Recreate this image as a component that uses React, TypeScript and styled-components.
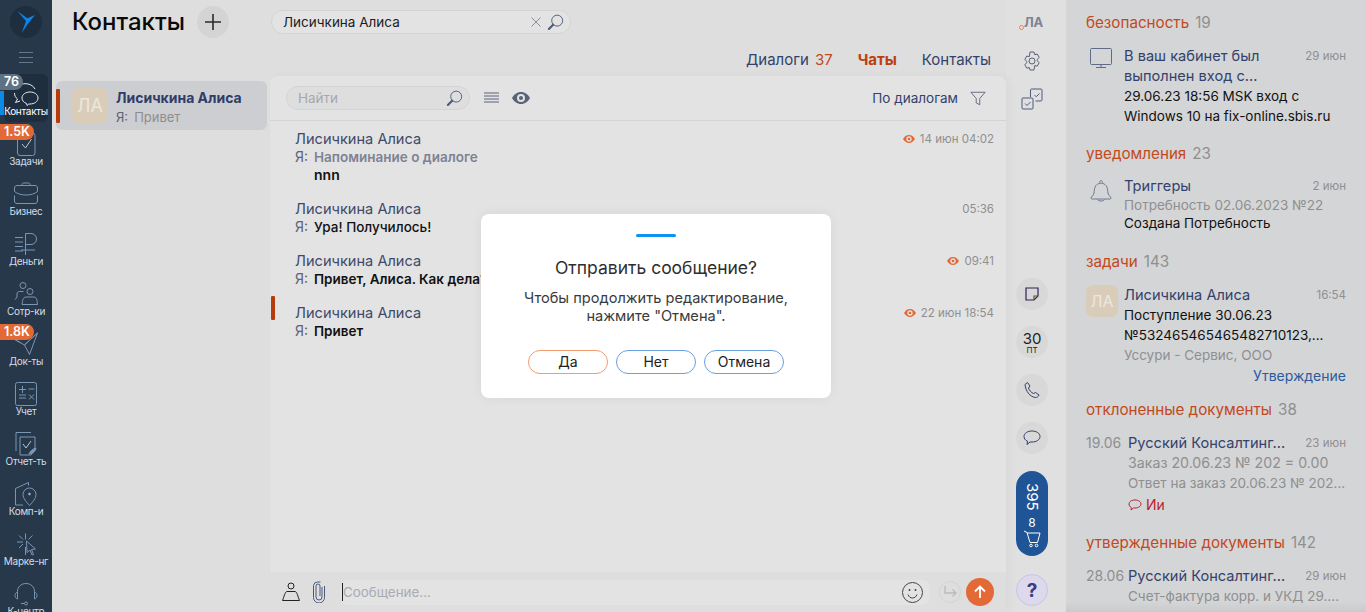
import React from "react";
import styled, { createGlobalStyle } from "styled-components";

const GlobalStyle = createGlobalStyle`
  html, body {
    margin: 0;
    padding: 0;
    height: 100%;
    overflow: hidden;
  }
  body {
    font-family: Inter, "Noto Sans", sans-serif;
    font-size: 14px;
    color: #000;
    background: #dedede;
  }
  #root {
    height: 100%;
  }
`;

const Page = styled.div`
  display: flex;
  height: 612px;
  width: 1366px;
  overflow: hidden;
  position: relative;
`;

/* left navigation */
const Sidebar = styled.nav`
  width: 52px;
  flex: none;
  background: #27384a;
  display: flex;
  flex-direction: column;
  align-items: center;
  padding-top: 6px;
  box-sizing: border-box;
  overflow: hidden;
`;

const LogoCircle = styled.div`
  width: 32px;
  height: 32px;
  border-radius: 50%;
  background: #1f2e3e;
  flex: none;
`;

const Burger = styled.div`
  width: 14px;
  height: 9px;
  flex: none;
  margin: 14px 0 9px;
  border-top: 1px solid #64778b;
  border-bottom: 1px solid #64778b;
  position: relative;

  &::after {
    content: "";
    position: absolute;
    left: 0;
    right: 0;
    top: 4px;
    border-top: 1px solid #64778b;
  }
`;

const NavItem = styled.div<{ $active?: boolean }>`
  position: relative;
  width: 52px;
  height: 50px;
  flex: none;
  display: flex;
  flex-direction: column;
  align-items: center;
  padding-top: 8px;
  box-sizing: border-box;
  color: ${(p) => (p.$active ? "#fff" : "#d5dde6")};

  ${(p) =>
    p.$active &&
    `
    &::before {
      content: "";
      position: absolute;
      left: 4px;
      right: 4px;
      top: 2px;
      bottom: 0;
      border-radius: 6px;
      background: #1f2e3e;
    }
    &::after {
      content: "";
      position: absolute;
      left: 0;
      top: 19px;
      width: 4px;
      height: 24px;
      background: #0d8ae5;
    }
  `}

  svg {
    position: relative;
    display: block;
    flex: none;
  }
`;

const NavLabel = styled.span`
  position: relative;
  font-size: 10px;
  line-height: 12px;
  margin-top: -1px;
  white-space: nowrap;
  letter-spacing: -0.3px;
`;

const NavBadge = styled.span<{ $tone: "grey" | "orange" }>`
  position: absolute;
  z-index: 1;
  left: 0;
  top: 2px;
  height: 16px;
  line-height: 16px;
  padding: 0 4px;
  border-radius: 0 8px 8px 0;
  font-size: 12.5px;
  font-weight: 600;
  color: #fff;
  background: ${(p) => (p.$tone === "grey" ? "#5f7283" : "#e36a36")};
`;

/* contacts column */
const ContactsColumn = styled.section`
  width: 218px;
  flex: none;
  display: flex;
  flex-direction: column;
`;

const TitleRow = styled.div`
  display: flex;
  align-items: center;
  gap: 12px;
  padding: 6px 0 0 20px;
  height: 32px;
`;

const Title = styled.h1`
  margin: 0;
  font-size: 24px;
  font-weight: 500;
  line-height: 32px;
  color: #0a0a0a;
`;

const RoundButton = styled.div<{ $size?: number; $bg?: string }>`
  width: ${(p) => p.$size ?? 32}px;
  height: ${(p) => p.$size ?? 32}px;
  border-radius: 50%;
  background: ${(p) => p.$bg ?? "#d4d4d4"};
  flex: none;
  display: flex;
  flex-direction: column;
  align-items: center;
  justify-content: center;
`;

const ContactCard = styled.div`
  position: relative;
  margin: 43px 3px 0 4px;
  height: 49px;
  border-radius: 6px;
  background: #cdced2;
  display: flex;
  align-items: center;
  padding-left: 16px;
  gap: 8px;
`;

const Marker = styled.i<{ $top: number; $left: number; $height: number }>`
  position: absolute;
  left: ${(p) => p.$left}px;
  top: ${(p) => p.$top}px;
  width: 4px;
  height: ${(p) => p.$height}px;
  border-radius: 1px;
  background: #b53c0b;
`;

const Avatar = styled.div<{ $size: number }>`
  width: ${(p) => p.$size}px;
  height: ${(p) => p.$size}px;
  border-radius: 7px;
  background: #d9cdb9;
  color: #ece7de;
  flex: none;
  display: flex;
  align-items: center;
  justify-content: center;
  font-size: ${(p) => Math.round(p.$size / 2)}px;
`;

const CardText = styled.div`
  padding-top: 4px;
`;

const CardName = styled.div`
  font-weight: 700;
  line-height: 18px;
  color: #2f3d68;
`;

const CardPreview = styled.div`
  font-size: 13px;
  line-height: 20px;
  color: #8d8d8d;
  display: flex;
  gap: 6px;
  span:first-child {
    color: #5d6478;
  }
`;

/* chat column */
const ChatColumn = styled.section`
  width: 736px;
  flex: none;
  display: flex;
  flex-direction: column;
`;

const SearchBar = styled.div`
  margin: 10px 0 0 1px;
  width: 300px;
  height: 24px;
  box-sizing: border-box;
  border: 1px solid #d4d4d4;
  border-radius: 12px;
  background: #e3e3e3;
  display: flex;
  align-items: center;
  padding: 0 6px 0 11px;
  flex: none;
`;

const SearchText = styled.span<{ $muted?: boolean }>`
  flex: 1;
  font-size: 13.5px;
  color: ${(p) => (p.$muted ? "#a6a8ad" : "#1c1c1c")};
  line-height: 22px;
`;

const Tabs = styled.div`
  display: flex;
  justify-content: flex-end;
  gap: 25px;
  padding: 15px 15px 0 0;
  height: 27px;
  flex: none;
  box-sizing: content-box;
`;

const Tab = styled.div<{ $active?: boolean }>`
  position: relative;
  font-size: 15px;
  font-weight: ${(p) => (p.$active ? 700 : 400)};
  color: ${(p) => (p.$active ? "#b8400d" : "#33426b")};
  line-height: 22px;

  ${(p) =>
    p.$active &&
    `
    &::after {
      content: "";
      position: absolute;
      left: 0;
      right: 0;
      bottom: -5px;
      height: 3px;
      border-radius: 2px 2px 0 0;
      background: #b53c0b;
    }
  `}
`;

const TabCount = styled.span`
  color: #c2491d;
  margin-left: 6px;
`;

const ChatPanel = styled.div`
  flex: 1;
  background: #e3e3e3;
  border-radius: 8px 8px 0 0;
  display: flex;
  flex-direction: column;
  position: relative;
  box-shadow: 4px 0 8px rgba(0, 0, 0, 0.03);
  min-height: 0;
`;

const ChatToolbar = styled.div`
  height: 45px;
  flex: none;
  box-sizing: border-box;
  border-bottom: 1px solid #d3d3d3;
  display: flex;
  align-items: center;
  padding: 0 20px 0 16px;
`;

const FindBox = styled(SearchBar)`
  margin: 0 12px 0 0;
  width: 184px;
  background: #dedede;
`;

const ToolIcon = styled.div`
  display: flex;
  margin-right: 12px;
`;

const SortLabel = styled.span`
  margin-left: auto;
  font-size: 13.5px;
  color: #33426b;
  margin-right: 12px;
`;

const MessageList = styled.div`
  flex: 1;
  padding-top: 9px;
  position: relative;
`;

const Message = styled.article`
  position: relative;
  padding: 0 12px 16px 25px;
  line-height: 18px;
`;

const MessageHead = styled.div`
  display: flex;
  justify-content: space-between;
  font-size: 14.6px;
  color: #3f4a6b;
`;

const MessageTime = styled.span`
  display: flex;
  align-items: center;
  gap: 5px;
  font-size: 11.5px;
  color: #8f8f8f;
`;

const MessageBody = styled.div`
  display: flex;
  gap: 6px;
`;

const Me = styled.span`
  color: #5d6478;
`;

const MessageText = styled.span<{ $tone?: "muted" | "plain" }>`
  font-size: 13.5px;
  font-weight: ${(p) => (p.$tone === "plain" ? 500 : 600)};
  color: ${(p) => (p.$tone === "muted" ? "#7d8294" : "#111")};
`;

const MessageExtra = styled.div`
  padding-left: 19px;
  font-weight: 600;
  color: #111;
`;

const Composer = styled.div`
  height: 40px;
  flex: none;
  background: #dedede;
  display: flex;
  align-items: center;
  padding: 0 12px;
`;

const ComposerInput = styled.div`
  margin-left: 14px;
  width: 590px;
  height: 25px;
  flex: none;
  box-sizing: border-box;
  background: #e3e3e3;
  border-radius: 8px;
  display: flex;
  align-items: center;
  padding: 0 7px 0 2px;
`;

const Caret = styled.i`
  width: 1px;
  height: 18px;
  background: #222;
  margin-right: 0;
`;

const Placeholder = styled.span`
  flex: 1;
  font-size: 13.4px;
  color: #a9abb3;
`;

const ForwardCircle = styled.div`
  width: 22px;
  height: 22px;
  margin-left: 9px;
  border-radius: 50%;
  box-sizing: border-box;
  border: 1px solid #d3d3d3;
  flex: none;
  display: flex;
  align-items: center;
  justify-content: center;
`;

const SendCircle = styled(RoundButton)`
  margin-left: 5px;
`;

/* narrow rail */
const Rail = styled.aside`
  width: 60px;
  flex: none;
  background: #e0e0e0;
  display: flex;
  flex-direction: column;
  align-items: center;
  padding: 12px 8px 6px 0;
  box-sizing: border-box;
`;

const RailUser = styled.div`
  position: relative;
  height: 20px;
  line-height: 20px;
  font-weight: 700;
  font-size: 13px;
  letter-spacing: -0.3px;
  color: #7d8294;
  padding-left: 3px;
  margin-bottom: 18px;

  &::before {
    content: "";
    position: absolute;
    left: -2px;
    top: 13px;
    width: 3px;
    height: 3px;
    border: 1px solid #e8835a;
    border-radius: 50%;
  }
`;

const RailIcon = styled.div`
  height: 22px;
  margin-bottom: 16px;
  display: flex;
`;

const RailBottom = styled.div`
  margin-top: auto;
  display: flex;
  flex-direction: column;
  align-items: center;
  gap: 16px;
`;

const DayNumber = styled.span`
  font-size: 15px;
  line-height: 15px;
  color: #1e1e1e;
`;

const DayName = styled.span`
  font-size: 8px;
  line-height: 8px;
  color: #1e1e1e;
`;

const CartPill = styled.div`
  width: 32px;
  height: 85px;
  margin: 1px 0 2px;
  border-radius: 16px;
  background: #1f5596;
  color: #fff;
  display: flex;
  flex-direction: column;
  align-items: center;
  padding-top: 12px;
  box-sizing: border-box;
`;

const CartSum = styled.span`
  writing-mode: vertical-rl;
  font-size: 15px;
  line-height: 16px;
  height: 27px;
`;

const CartCount = styled.span`
  font-size: 12px;
  line-height: 14px;
  margin-top: 6px;
`;

const HelpButton = styled(RoundButton)`
  box-sizing: border-box;
  border: 1px solid #c9c3e8;
`;

const HelpMark = styled.span`
  font-size: 19px;
  font-weight: 700;
  color: #3d3b85;
`;

/* right feed */
const Feed = styled.aside`
  width: 300px;
  flex: none;
  background: #d4d5d7;
  padding: 13px 20px 0;
  box-sizing: border-box;
  line-height: 20px;
  overflow: hidden;
  position: relative;

  &::after {
    content: "";
    position: absolute;
    left: 0;
    right: 0;
    bottom: 0;
    height: 10px;
    background: linear-gradient(rgba(0, 0, 0, 0), rgba(0, 0, 0, 0.05));
  }
`;

const FeedHeading = styled.h3`
  margin: 0 0 13px;
  font-size: 15.2px;
  font-weight: 400;
  line-height: 20px;
  color: #c2491d;
`;

const FeedCount = styled.span`
  color: #8f8f8f;
  margin-left: 6px;
`;

const FeedItem = styled.div<{ $gap?: number; $tight?: boolean }>`
  display: grid;
  grid-template-columns: 38px minmax(0, 1fr);
  margin-bottom: ${(p) => p.$gap ?? 18}px;
  line-height: ${(p) => (p.$tight ? "18.7px" : "20px")};
`;

const DatedItem = styled(FeedItem)`
  grid-template-columns: 42px minmax(0, 1fr);
`;

const FeedLead = styled.div`
  color: #8f8f8f;
  font-size: 14px;
`;

const FeedIconBox = styled.div`
  padding: 2px 0 0 4px;
`;

const FeedTop = styled.div`
  display: flex;
  justify-content: space-between;
  gap: 12px;
`;

const FeedTitle = styled.span`
  font-size: 14.6px;
  color: #33426b;
`;

const FeedWhen = styled.span`
  font-size: 11.5px;
  color: #8f8f8f;
  white-space: nowrap;
  flex: none;
`;

const FeedLine = styled.div<{ $tone?: "muted" | "black"; $size?: number }>`
  font-size: ${(p) => p.$size ?? 13.5}px;
  color: ${(p) => (p.$tone === "muted" ? "#8f8f8f" : "#111")};
  white-space: nowrap;
`;

const FeedStatus = styled.div`
  text-align: right;
  color: #2a5b9e;
  line-height: 22px;
`;

const FeedComment = styled.div`
  color: #b9222c;
  display: flex;
  align-items: center;
  gap: 4px;
  line-height: 24px;
`;

/* modal */
const Overlay = styled.div`
  position: absolute;
  inset: 0;
  padding-right: 54px;
  display: flex;
  align-items: center;
  justify-content: center;
`;

const Dialog = styled.div`
  width: 350px;
  height: 184px;
  box-sizing: border-box;
  background: #fff;
  border-radius: 8px;
  padding-top: 20px;
  display: flex;
  flex-direction: column;
  align-items: center;
  box-shadow: 0 0 12px rgba(0, 0, 0, 0.06);
`;

const DialogBar = styled.i`
  width: 40px;
  height: 3px;
  border-radius: 2px;
  background: #0d94f2;
`;

const DialogTitle = styled.div`
  margin-top: 20px;
  font-size: 17.5px;
  line-height: 22px;
  color: #2e2e2e;
`;

const DialogText = styled.div`
  margin-top: 10px;
  font-size: 14.6px;
  line-height: 18px;
  color: #3a3a3a;
  text-align: center;
`;

const DialogButtons = styled.div`
  margin-top: 25px;
  display: flex;
  gap: 8px;
`;

const DialogButton = styled.button<{ $primary?: boolean }>`
  width: 80px;
  height: 24px;
  padding: 0;
  font: inherit;
  line-height: 22px;
  color: #222;
  background: #fff;
  border-radius: 12px;
  border: 1px solid ${(p) => (p.$primary ? "#f29a72" : "#6a9fe0")};
`;

type IconProps = { color?: string };

const Stroke: React.FC<React.SVGProps<SVGSVGElement> & { size?: number }> = ({
  size = 26,
  children,
  ...rest
}) => (
  <svg
    width={size}
    height={size}
    viewBox={`0 0 ${size} ${size}`}
    fill="none"
    stroke="#7a96b5"
    strokeWidth={1}
    {...rest}
  >
    {children}
  </svg>
);

const navIcons: Record<string, React.ReactNode> = {
  contacts: (
    <Stroke stroke="#e8eef4">
      <path d="M17 12c4.500 0 8 2.500 8 6s-3.500 6-8 6h-1.200l-1.800 1.500-.4-2c-2.900-1-4.600-3-4.600-5.500 0-3.500 3.500-6 8-6z" />
      <path d="M6 5c6-2.500 13-1.500 16 4" />
      <path d="M1.500 13c0 2.500 1 4.500 3 6l-2 3.500 4.500-1.500" />
    </Stroke>
  ),
  tasks: (
    <Stroke>
      <rect x="4.500" y="3" width="17.500" height="22.500" rx="2.500" />
      <path d="M9 14l3.500 4 6-9" stroke="#b9c9da" />
    </Stroke>
  ),
  business: (
    <Stroke>
      <path d="M1.500 8c0-1.500 1-2.500 2.500-2.500h18c1.500 0 2.500 1 2.500 2.500v3.500c-3 2.500-7 3.500-11.500 3.500S4.500 14 1.500 11.500z" />
      <path d="M9 5.500V4.500c0-1 .7-1.500 1.500-1.500h5c.8 0 1.500.5 1.500 1.500v1" />
      <path d="M1.500 15.500V21c0 1.500 1 2.500 2.500 2.500h18c1.500 0 2.500-1 2.500-2.500v-5.500" />
    </Stroke>
  ),
  money: (
    <Stroke>
      <path d="M12.500 25V3.500h5.500a5.500 5.500 0 0 1 0 11h-5.500M8 20h14" />
      <path d="M2 7.500h8M2 12h8M2 16.500h8M2 21h8" />
    </Stroke>
  ),
  staff: (
    <Stroke>
      <circle cx="10" cy="5.500" r="3" />
      <circle cx="17" cy="11.500" r="3" />
      <path d="M4 17v-3c0-1.500 1-2.500 2.500-2.500h4M2 19.500l2-2.500" />
      <path d="M9 24.500c.5-4 1-7.500 4-7.500h8c3 0 3 3.500 3.500 7.500z" />
    </Stroke>
  ),
  docs: (
    <Stroke>
      <path d="M24.500 3L16.500 24.500l-5-9.500z" />
      <path d="M24.500 3L11.500 15 2.500 10l4-1.500M2.500 10l5 2.500" />
    </Stroke>
  ),
  account: (
    <Stroke>
      <rect x="2.500" y="2.500" width="21" height="23" rx="2" />
      <path d="M6 9.500h7M9.500 6v7M15.500 9h6M6 15h7M6 18h7M16 14.500l5 5M21 14.500l-5 5" />
    </Stroke>
  ),
  report: (
    <Stroke>
      <path d="M3 21V2.500h15" />
      <path d="M7 7h15v12l-4 6H7z" />
      <path d="M10 14l3 4 5-7" stroke="#b9c9da" />
      <path d="M16 24c1-2.500 3-5 7-6-.5 3-2.500 5.500-7 6z" fill="#7a96b5" />
    </Stroke>
  ),
  comp: (
    <Stroke>
      <path d="M2.500 25V8.500l13-6v3M2.500 25H10" />
      <path d="M16.500 25.500c-3-3.500-6.500-7-6.500-11a6.500 6.500 0 0 1 13 0c0 4-3.500 7.500-6.500 11z" />
      <circle cx="16.500" cy="14" r="1" fill="#b9c9da" />
    </Stroke>
  ),
  marketing: (
    <Stroke>
      <path d="M12.500 3.500v6M12.500 17v8M4 12h6M6 5.500l4 4M19.500 5.500l-4 4M6 18l4-4" />
      <path d="M13.500 11l9 8-4 .5 2 5-1.500.5-2-5-3 2.500z" />
    </Stroke>
  ),
  call: (
    <Stroke>
      <path d="M4.500 15v-3.500C4.500 7 8 3.500 13 3.500s8.500 3.500 8.500 8V15" />
      <path d="M4.500 12c-1.500.5-2.500 2-2.500 3.500S3 18.500 4.500 19zM21.500 12c1.500.5 2.500 2 2.500 3.500s-1 3-2.500 3.500z" />
      <path d="M8 23.500h3" />
      <circle cx="13" cy="23.500" r="1.500" />
    </Stroke>
  ),
};

const navItems = [
  { id: "contacts", label: "Контакты", active: true, badge: "76", tone: "grey" as const },
  { id: "tasks", label: "Задачи", badge: "1.5K", tone: "orange" as const },
  { id: "business", label: "Бизнес" },
  { id: "money", label: "Деньги" },
  { id: "staff", label: "Сотр-ки" },
  { id: "docs", label: "Док-ты", badge: "1.8K", tone: "orange" as const },
  { id: "account", label: "Учет" },
  { id: "report", label: "Отчет-ть" },
  { id: "comp", label: "Комп-и" },
  { id: "marketing", label: "Марке-нг" },
  { id: "call", label: "К-центр" },
];

const Magnifier: React.FC<IconProps> = ({ color = "#4a5a78" }) => (
  <svg width="17" height="17" viewBox="0 0 18 18" fill="none">
    <circle cx="10.800" cy="7" r="5.800" stroke={color} />
    <path d="M6.500 11.300L2 15.800" stroke={color} strokeWidth="2.200" strokeLinecap="round" />
  </svg>
);

const SeenEye: React.FC<{ color: string; width?: number }> = ({ color, width = 12 }) => (
  <svg width={width} height={(width * 2) / 3} viewBox="0 0 18 12">
    <path
      d="M9 0C5 0 2 2.500 0 6c2 3.500 5 6 9 6s7-2.500 9-6c-2-3.500-5-6-9-6zm0 10a4 4 0 1 1 0-8 4 4 0 0 1 0 8z"
      fill={color}
    />
    <circle cx="9" cy="6" r="2" fill={color} />
  </svg>
);

const App: React.FC = () => {
  return (
    <Page>
      <GlobalStyle />
      <Sidebar>
        <LogoCircle>
          <svg width="32" height="32" viewBox="0 0 32 32">
            <path d="M7.300 5l10 7.300L25 9l-8 10-5.300 8.300L16 15z" fill="#0c84ea" />
          </svg>
        </LogoCircle>
        <Burger />
        {navItems.map((item) => (
          <NavItem key={item.id} $active={item.active}>
            {item.badge && <NavBadge $tone={item.tone!}>{item.badge}</NavBadge>}
            {navIcons[item.id]}
            <NavLabel>{item.label}</NavLabel>
          </NavItem>
        ))}
      </Sidebar>

      <ContactsColumn>
        <TitleRow>
          <Title>Контакты</Title>
          <RoundButton>
            <svg width="18" height="18" viewBox="0 0 18 18">
              <path d="M9 1v16M1 9h16" stroke="#2b2b2b" strokeWidth="1.600" />
            </svg>
          </RoundButton>
        </TitleRow>
        <ContactCard>
          <Marker $left={0} $top={8} $height={34} />
          <Avatar $size={36}>ЛА</Avatar>
          <CardText>
            <CardName>Лисичкина Алиса</CardName>
            <CardPreview>
              <span>Я:</span>
              <span>Привет</span>
            </CardPreview>
          </CardText>
        </ContactCard>
      </ContactsColumn>

      <ChatColumn>
        <SearchBar>
          <SearchText>Лисичкина Алиса</SearchText>
          <svg width="12" height="12" viewBox="0 0 12 12" style={{ marginRight: 5 }}>
            <path d="M1.500 1.500l9 9M10.500 1.500l-9 9" stroke="#8a8f9c" />
          </svg>
          <Magnifier />
        </SearchBar>
        <Tabs>
          <Tab>
            Диалоги<TabCount>37</TabCount>
          </Tab>
          <Tab $active>Чаты</Tab>
          <Tab>Контакты</Tab>
        </Tabs>
        <ChatPanel>
          <ChatToolbar>
            <FindBox>
              <SearchText $muted>Найти</SearchText>
              <Magnifier />
            </FindBox>
            <ToolIcon>
              <svg width="18" height="12" viewBox="0 0 18 12">
                <path d="M2 1h15M2 4h15M2 7h15M2 10h15" stroke="#5a6278" />
              </svg>
            </ToolIcon>
            <ToolIcon>
              <SeenEye color="#5a6278" width={18} />
            </ToolIcon>
            <SortLabel>По диалогам</SortLabel>
            <svg width="16" height="15" viewBox="0 0 18 16" fill="none">
              <path d="M1 1h16l-6 7v7l-4-2V8z" stroke="#5a6278" />
            </svg>
          </ChatToolbar>
          <MessageList>
            <Message>
              <MessageHead>
                Лисичкина Алиса
                <MessageTime>
                  <SeenEye color="#e36a36" />
                  14 июн 04:02
                </MessageTime>
              </MessageHead>
              <MessageBody>
                <Me>Я:</Me>
                <MessageText $tone="muted">Напоминание о диалоге</MessageText>
              </MessageBody>
              <MessageExtra>nnn</MessageExtra>
            </Message>
            <Message>
              <MessageHead>
                Лисичкина Алиса
                <MessageTime>05:36</MessageTime>
              </MessageHead>
              <MessageBody>
                <Me>Я:</Me>
                <MessageText $tone="plain">Ура! Получилось!</MessageText>
              </MessageBody>
            </Message>
            <Message>
              <MessageHead>
                Лисичкина Алиса
                <MessageTime>
                  <SeenEye color="#e36a36" />
                  09:41
                </MessageTime>
              </MessageHead>
              <MessageBody>
                <Me>Я:</Me>
                <MessageText>Привет, Алиса. Как дела?</MessageText>
              </MessageBody>
            </Message>
            <Message>
              <Marker $left={1} $top={-8} $height={24} />
              <MessageHead>
                Лисичкина Алиса
                <MessageTime>
                  <SeenEye color="#e36a36" />
                  22 июн 18:54
                </MessageTime>
              </MessageHead>
              <MessageBody>
                <Me>Я:</Me>
                <MessageText>Привет</MessageText>
              </MessageBody>
            </Message>
          </MessageList>
          <Composer>
            <svg width="18" height="20" viewBox="0 0 18 20" fill="none">
              <circle cx="9" cy="4" r="3" stroke="#222" />
              <path d="M.500 18.500C2 15 3 9.500 5 9.500h8c2 0 3 5.500 4.500 9z" stroke="#222" />
            </svg>
            <svg width="14" height="22" viewBox="0 0 14 22" fill="none" style={{ marginLeft: 12 }}>
              <path
                d="M10 6v10a3 3 0 0 1-6 0V5a2 2 0 0 1 4 0v10M12.500 5v11.500a5.500 5.500 0 0 1-11 0V4.500a4 4 0 0 1 4-3.500h3"
                stroke="#4a5a78"
              />
            </svg>
            <ComposerInput>
              <Caret />
              <Placeholder>Сообщение...</Placeholder>
              <svg width="21" height="21" viewBox="0 0 21 21" fill="none">
                <circle cx="10.500" cy="10.500" r="10" stroke="#444" />
                <circle cx="7.500" cy="8" r="1" fill="#444" />
                <circle cx="13.500" cy="8" r="1" fill="#444" />
                <path d="M6 12.500c1 2.500 2.500 3.500 4.500 3.500s3.500-1 4.500-3.500" stroke="#444" />
              </svg>
            </ComposerInput>
            <ForwardCircle>
              <svg width="14" height="12" viewBox="0 0 14 12" fill="none">
                <path d="M2 0v7h11M9.500 3.500L13 7l-3.500 3.500" stroke="#bbb" strokeWidth="1.300" />
              </svg>
            </ForwardCircle>
            <SendCircle $size={28} $bg="#e36a36">
              <svg width="14" height="14" viewBox="0 0 14 14" fill="none">
                <path d="M7 13V1.500M2 6.500l5-5 5 5" stroke="#fff" strokeWidth="1.800" />
              </svg>
            </SendCircle>
          </Composer>
        </ChatPanel>
      </ChatColumn>

      <Rail>
        <RailUser>ЛА</RailUser>
        <RailIcon>
          <svg width="22" height="22" viewBox="0 0 22 22" fill="none">
            <path
              d="M9 2h4l.7 2.700 2.500-.7 2 3.400-1.900 2 0 1.400 1.900 2-2 3.400-2.500-.7L13 20H9l-.7-2.500-2.500.7-2-3.400 1.900-2v-1.400l-1.900-2 2-3.400 2.500.7z"
              stroke="#5a6278"
            />
            <circle cx="11" cy="11" r="3" stroke="#5a6278" />
          </svg>
        </RailIcon>
        <RailIcon>
          <svg width="22" height="22" viewBox="0 0 22 22" fill="none">
            <rect x="1" y="10" width="11" height="11" rx="1" stroke="#4f5a7a" />
            <path d="M4 15.500l2 2 3.500-3.500" stroke="#4f5a7a" />
            <path d="M9.500 9V2C9.500 1.500 10 1 10.500 1h9.500c.5 0 1 .5 1 1v10c0 .5-.5 1-1 1h-5.500" stroke="#4f5a7a" />
            <path d="M13.500 7.500l2 1 3-3" stroke="#4f5a7a" />
          </svg>
        </RailIcon>
        <RailBottom>
          <RoundButton $bg="#d8d8d8">
            <svg width="14" height="14" viewBox="0 0 14 14" fill="none">
              <path d="M13 9V1H1v12h8z" stroke="#2b2450" strokeWidth="1.200" />
              <path d="M9 13V9h4" stroke="#6b4f2a" strokeWidth="1.200" />
            </svg>
          </RoundButton>
          <RoundButton $bg="#d8d8d8">
            <DayNumber>30</DayNumber>
            <DayName>ПТ</DayName>
          </RoundButton>
          <RoundButton $bg="#d8d8d8">
            <svg width="18" height="18" viewBox="0 0 18 18" fill="none">
              <path
                d="M2 3.500L4.500 1.500l2.500 3.500-1.500 2c.5 2 2.500 4.500 5 5.500l2-1 3.500 2.500c-.5 1.500-2 2.500-3.500 2.500C7 16 2.500 10 2 3.500z"
                stroke="#2f3d68"
              />
            </svg>
          </RoundButton>
          <RoundButton $bg="#d8d8d8">
            <svg width="18" height="16" viewBox="0 0 18 16" fill="none">
              <path
                d="M9 1c4.500 0 8 2.300 8 5.500S13.500 12 9 12H7l-3 2.500.5-3.300C2.300 10.300 1 8.500 1 6.500 1 3.300 4.500 1 9 1z"
                stroke="#2f3d68"
              />
            </svg>
          </RoundButton>
          <CartPill>
            <CartSum>395</CartSum>
            <CartCount>8</CartCount>
            <svg width="18" height="18" viewBox="0 0 18 18" fill="none">
              <path d="M1 1l3 1.500 3 10h7.500L17 3H4" stroke="#fff" />
              <circle cx="8" cy="15.500" r="1.300" stroke="#fff" />
              <circle cx="13.500" cy="15.500" r="1.300" stroke="#fff" />
            </svg>
          </CartPill>
          <HelpButton $bg="#dcd9ec">
            <HelpMark>?</HelpMark>
          </HelpButton>
        </RailBottom>
      </Rail>

      <Feed>
        <FeedHeading>
          безопасность<FeedCount>19</FeedCount>
        </FeedHeading>
        <FeedItem $gap={18}>
          <FeedIconBox>
            <svg width="23" height="21" viewBox="0 0 23 21" fill="none">
              <rect x=".5" y=".5" width="21" height="16" rx="1" stroke="#5f6b88" />
              <path d="M11 17v2M6 19.500h10" stroke="#5f6b88" />
            </svg>
          </FeedIconBox>
          <div>
            <FeedTop>
              <FeedTitle>
                В ваш кабинет был
                <br />
                выполнен вход с...
              </FeedTitle>
              <FeedWhen>29 июн</FeedWhen>
            </FeedTop>
            <FeedLine>29.06.23 18:56 MSK вход с</FeedLine>
            <FeedLine>Windows 10 на fix-online.sbis.ru</FeedLine>
          </div>
        </FeedItem>

        <FeedHeading>
          уведомления<FeedCount>23</FeedCount>
        </FeedHeading>
        <FeedItem $gap={19} $tight>
          <FeedIconBox>
            <svg width="22" height="24" viewBox="0 0 22 24" fill="none">
              <path
                d="M1 19c0-1.500 2.500-2 3-5 .5-3.500 0-9 7-10 7 1 6.500 6.500 7 10 .5 3 3 3.500 3 5 0 .7-.5 1-1 1H2c-.5 0-1-.3-1-1z"
                stroke="#6f7890"
              />
              <path d="M9.500 3.500C9.500 1 12.500 1 12.500 3.500M7.500 20.500c.5 2 6.500 2 7 0" stroke="#6f7890" />
            </svg>
          </FeedIconBox>
          <div>
            <FeedTop>
              <FeedTitle>Триггеры</FeedTitle>
              <FeedWhen>2 июн</FeedWhen>
            </FeedTop>
            <FeedLine $tone="muted">Потребность 02.06.2023 №22</FeedLine>
            <FeedLine>Создана Потребность</FeedLine>
          </div>
        </FeedItem>

        <FeedHeading>
          задачи<FeedCount>143</FeedCount>
        </FeedHeading>
        <FeedItem $gap={13}>
          <Avatar $size={32}>ЛА</Avatar>
          <div>
            <FeedTop>
              <FeedTitle>Лисичкина Алиса</FeedTitle>
              <FeedWhen>16:54</FeedWhen>
            </FeedTop>
            <FeedLine>Поступление 30.06.23</FeedLine>
            <FeedLine>№532465465465482710123,...</FeedLine>
            <FeedLine $tone="muted">Уссури - Сервис, ООО</FeedLine>
            <FeedStatus>Утверждение</FeedStatus>
          </div>
        </FeedItem>

        <FeedHeading>
          отклоненные документы<FeedCount>38</FeedCount>
        </FeedHeading>
        <DatedItem $gap={16}>
          <FeedLead>19.06</FeedLead>
          <div>
            <FeedTop>
              <FeedTitle>Русский Консалтинг...</FeedTitle>
              <FeedWhen>23 июн</FeedWhen>
            </FeedTop>
            <FeedLine $tone="muted" $size={14.2}>Заказ 20.06.23 № 202 = 0.00</FeedLine>
            <FeedLine $tone="muted">Ответ на заказ 20.06.23 № 202...</FeedLine>
            <FeedComment>
              <svg width="14" height="12" viewBox="0 0 14 12" fill="none">
                <path
                  d="M7 1c3.300 0 6 1.700 6 4s-2.700 4-6 4H5.500L3 11l.3-2.500C1.900 7.800 1 6.500 1 5c0-2.300 2.700-4 6-4z"
                  stroke="#b9222c"
                />
              </svg>
              Ии
            </FeedComment>
          </div>
        </DatedItem>

        <FeedHeading>
          утвержденные документы<FeedCount>142</FeedCount>
        </FeedHeading>
        <DatedItem>
          <FeedLead>28.06</FeedLead>
          <div>
            <FeedTop>
              <FeedTitle>Русский Консалтинг...</FeedTitle>
              <FeedWhen>29 июн</FeedWhen>
            </FeedTop>
            <FeedLine $tone="muted">Счет-фактура корр. и УКД 29....</FeedLine>
          </div>
        </DatedItem>
      </Feed>

      <Overlay>
        <Dialog>
          <DialogBar />
          <DialogTitle>Отправить сообщение?</DialogTitle>
          <DialogText>
            Чтобы продолжить редактирование,
            <br />
            нажмите "Отмена".
          </DialogText>
          <DialogButtons>
            <DialogButton $primary>Да</DialogButton>
            <DialogButton>Нет</DialogButton>
            <DialogButton>Отмена</DialogButton>
          </DialogButtons>
        </Dialog>
      </Overlay>
    </Page>
  );
};

export default App;
